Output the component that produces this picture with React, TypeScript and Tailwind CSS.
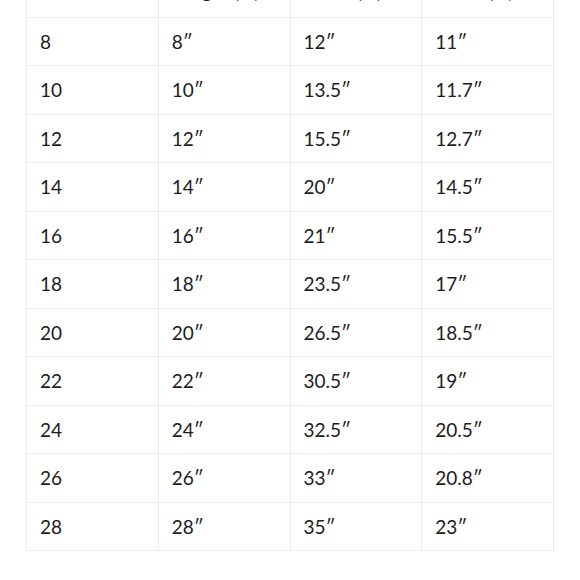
const rows: [string, string, string, string][] = [
  ["8", "8″", "12″", "11″"],
  ["10", "10″", "13.5″", "11.7″"],
  ["12", "12″", "15.5″", "12.7″"],
  ["14", "14″", "20″", "14.5″"],
  ["16", "16″", "21″", "15.5″"],
  ["18", "18″", "23.5″", "17″"],
  ["20", "20″", "26.5″", "18.5″"],
  ["22", "22″", "30.5″", "19″"],
  ["24", "24″", "32.5″", "20.5″"],
  ["26", "26″", "33″", "20.8″"],
  ["28", "28″", "35″", "23″"],
];

const cell = "h-[48.5px] border-[1.5px] border-[#ececec] pl-[13px] align-middle";

export default function App() {
  return (
    <div className="h-[580px] w-[580px] overflow-hidden bg-white font-['Lato','Open_Sans',sans-serif] text-[#1c1c1c]">
      <table className="mx-auto -mt-[32px] w-[528px] table-fixed border-collapse text-left text-[19px] leading-none">
        <thead>
          <tr>
            <th className={`${cell} pb-[5px] font-semibold`}>Size</th>
            <th className={`${cell} pb-[5px] font-semibold`}>Length (in)</th>
            <th className={`${cell} pb-[5px] font-semibold`}>Chest (in)</th>
            <th className={`${cell} pb-[5px] font-semibold`}>Waist (in)</th>
          </tr>
        </thead>
        <tbody>
          {rows.map((r) => (
            <tr key={r[0]}>
              {r.map((v, i) => (
                <td key={i} className={cell}>
                  {v}
                </td>
              ))}
            </tr>
          ))}
        </tbody>
      </table>
    </div>
  );
}
